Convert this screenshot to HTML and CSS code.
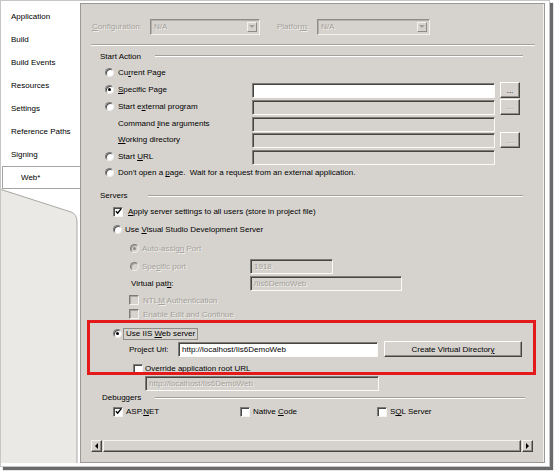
FILE: index.html
```html
<!DOCTYPE html>
<html>
<head>
<meta charset="utf-8">
<title>Web properties</title>
<link rel="stylesheet" href="styles.css">
</head>
<body>
<div class="frame">
  <nav class="sidebar">
    <ul class="tabs">
      <li class="tab">Application</li>
      <li class="tab">Build</li>
      <li class="tab">Build Events</li>
      <li class="tab">Resources</li>
      <li class="tab">Settings</li>
      <li class="tab">Reference Paths</li>
      <li class="tab">Signing</li>
      <li class="tab active">Web*</li>
    </ul>
    <svg class="tail" viewBox="0 0 79 274" preserveAspectRatio="xMinYMin slice">
      <path d="M0,0 L70,23 Q76,25 76,33 L76,274 L0,274 Z" fill="#ebe9e6"/>
      <path d="M0,0.5 L70,23 Q76,25 76,33 L76,274" fill="none" stroke="#aaa8a4" stroke-width="1"/>
    </svg>
  </nav>

  <main class="panel">
    <div class="config">
      <span class="cfg-label dis"><u>C</u>onfiguration:</span>
      <span class="combo cfg"><span class="dis">N/A</span><i class="drop"></i></span>
      <span class="plat-label dis">Platfor<u>m</u>:</span>
      <span class="combo plat"><span class="dis">N/A</span><i class="drop"></i></span>
    </div>
    <div class="etched"></div>

    <div class="group-head gh-start"><span class="gh-label w-start">Start Action</span><i class="rule"></i></div>
    <div class="start-rows">
      <div class="srow"><i class="radio c-radio"></i><span class="c-label">Cu<u>r</u>rent Page</span></div>
      <div class="srow"><i class="radio on c-radio"></i><span class="c-label"><u>S</u>pecific Page</span><span class="box white c-box"></span><span class="btn c-btn">...</span></div>
      <div class="srow"><i class="radio c-radio"></i><span class="c-label">Start e<u>x</u>ternal program</span><span class="box c-box"></span><span class="btn c-btn dis">...</span></div>
      <div class="srow"><span class="c-label">Command <u>l</u>ine arguments</span><span class="box c-box"></span></div>
      <div class="srow"><span class="c-label"><u>W</u>orking directory</span><span class="box c-box"></span><span class="btn c-btn dis">...</span></div>
      <div class="srow"><i class="radio c-radio"></i><span class="c-label">Start <u>U</u>RL</span><span class="box c-box"></span></div>
      <div class="srow"><i class="radio c-radio"></i><span class="c-wide">Don't open a <u>p</u>age.&nbsp; Wait for a request from an external application.</span></div>
    </div>

    <div class="group-head gh-servers"><span class="gh-label w-servers">Servers</span><i class="rule"></i></div>
    <div class="row r-apply"><i class="check on"><svg viewBox="0 0 8 8"><path d="M1,3.5 L3,6 L7,1" fill="none" stroke="#000" stroke-width="1.6"/></svg></i><span><u>A</u>pply server settings to all users (store in project file)</span></div>
    <div class="row r-usevs"><i class="radio"></i><span>Use <u>V</u>isual Studio Development Server</span></div>
    <div class="row r-auto"><i class="radio on off"></i><span class="dis">Auto-assig<u>n</u> Port</span></div>
    <div class="row r-spec"><i class="radio off"></i><span class="dis lbl-port">Spe<u>c</u>ific port</span><span class="box port"><span class="dis">1918</span></span></div>
    <div class="row r-vpath"><span class="lbl-vpath">Virtual pat<u>h</u>:</span><span class="box vpath"><span class="dis">/Iis6DemoWeb</span></span></div>
    <div class="row r-ntlm"><i class="check off"></i><span class="dis">NTL<u>M</u> Authentication</span></div>
    <div class="row r-edit"><i class="check off"></i><span class="dis">Enable Edit and Continue</span></div>
    <div class="row r-iis"><i class="radio on"></i><span class="focus">Use IIS <u>W</u>eb server</span></div>
    <div class="row r-url"><span class="lbl-url">Pro<u>j</u>ect Url:</span><span class="box white url">http://localhost/Iis6DemoWeb</span><span class="btn cvd">Create Virtual Director<u>y</u></span></div>
    <div class="row r-override"><i class="check"></i><span>Override application root <u>U</u>RL</span></div>
    <div class="row r-oburl"><span class="box oburl"><span class="dis">http://localhost/Iis6DemoWeb</span></span></div>

    <div class="group-head gh-debug"><span class="gh-label w-debug">Debuggers</span><i class="rule"></i></div>
    <div class="row r-debug">
      <span class="dbg w-asp"><i class="check on"><svg viewBox="0 0 8 8"><path d="M1,3.5 L3,6 L7,1" fill="none" stroke="#000" stroke-width="1.6"/></svg></i><span>ASP.<u>N</u>ET</span></span>
      <span class="dbg w-native"><i class="check"></i><span>Native <u>C</u>ode</span></span>
      <span class="dbg"><i class="check"></i><span>S<u>Q</u>L Server</span></span>
    </div>

    <div class="hscroll">
      <span class="sb-btn"><i class="arr-left"></i></span>
      <span class="sb-thumb"></span>
      <span class="sb-btn"><i class="arr-right"></i></span>
    </div>
  </main>

  <div class="callout"></div>
</div>
</body>
</html>
```

FILE: styles.css
```css
* { box-sizing: border-box; margin: 0; padding: 0; }
html, body { background: #fff; }
body {
  width: 554px;
  height: 471px;
  overflow: hidden;
  font-family: "Liberation Sans", Arial, sans-serif;
  font-size: 8px;
  color: #000;
}
u { text-decoration: underline; text-underline-offset: 1px; }
i { display: block; font-style: normal; }

.frame {
  position: relative;
  display: flex;
  width: 550px;
  height: 467px;
  border: 1px solid #c6c6c6;
  padding: 0 4px 3px 0;
  box-shadow: 3px 3px 1px #6a6a6a;
  background: #fff;
}

/* ---------- sidebar ---------- */
.sidebar {
  flex: none;
  width: 79px;
  display: flex;
  flex-direction: column;
  background: #fff;
}
.tabs { list-style: none; padding-top: 4px; }
.tab {
  height: 23px;
  line-height: 23px;
  padding-left: 10px;
  white-space: nowrap;
}
.tab.active {
  margin-left: 1px;
  border: 1px solid #a4a4a4;
  border-right: none;
  line-height: 21px;
  padding-left: 18px;
}
.tail { flex: 1; display: block; width: 79px; }

/* ---------- panel ---------- */
.panel {
  flex: 1;
  margin-top: 2px;
  border: 1px solid #9c9a95;
  background: #d6d3ce;
  box-shadow: inset -1px 0 0 #f2f1ef;
  display: flex;
  flex-direction: column;
  white-space: nowrap;
}

.dis { color: #a4a19a; text-shadow: 1px 1px 0 rgba(255,255,255,0.65); }

.config {
  display: flex;
  align-items: center;
  height: 17px;
  margin-top: 14px;
  padding-left: 11px;
}
.cfg-label { width: 58px; }
.plat-label { width: 40px; margin-left: 17px; }
.combo {
  display: flex;
  align-items: center;
  justify-content: space-between;
  height: 16px;
  padding: 0 2px 0 3px;
  border: 1px solid;
  border-color: #8e8c87 #f4f3f1 #f4f3f1 #8e8c87;
  box-shadow: inset 1px 1px 0 #b4b1ab;
}
.combo.cfg { width: 110px; }
.combo.plat { width: 113px; }
.drop {
  width: 10px;
  height: 10px;
  border: 1px solid;
  border-color: #f4f3f1 #8e8c87 #8e8c87 #f4f3f1;
  display: flex;
  align-items: center;
  justify-content: center;
}
.drop::after {
  content: "";
  border-top: 3px solid #a4a19a;
  border-left: 3px solid transparent;
  border-right: 3px solid transparent;
}

.etched {
  height: 2px;
  margin: 9px 9px 0 10px;
  border-top: 1px solid #a3a09a;
  border-bottom: 1px solid #fff;
}

.group-head {
  display: flex;
  align-items: center;
  height: 12px;
  padding: 0 21px 0 19px;
}
.gh-start { margin-top: 4px; }
.gh-servers { margin-top: 8.67px; }
.gh-debug { padding-left: 21px; padding-right: 19px; }
.w-start { width: 55px; }
.w-servers { width: 48px; }
.w-debug { width: 53px; }
.rule {
  flex: 1;
  height: 2px;
  border-top: 1px solid #a3a09a;
  border-bottom: 1px solid #fff;
}

/* ---------- controls ---------- */
.radio {
  flex: none;
  width: 9px;
  height: 9px;
  border-radius: 50%;
  background: #fff;
  border: 1px solid;
  border-color: #7e7c78 #eeede9 #eeede9 #7e7c78;
  box-shadow: inset 1px 1px 0 #505050;
  display: flex;
  align-items: center;
  justify-content: center;
}
.radio.on::after {
  content: "";
  width: 3px;
  height: 3px;
  border-radius: 50%;
  background: #000;
}
.radio.off { background: #d6d3ce; box-shadow: inset 1px 1px 0 #a09d97; }
.radio.off.on::after { background: #8c8a85; }

.check {
  flex: none;
  width: 10px;
  height: 10px;
  background: #fff;
  border: 1px solid;
  border-color: #7e7c78 #f4f3f1 #f4f3f1 #7e7c78;
  box-shadow: inset 1px 1px 0 #4a4a4a;
  display: flex;
  align-items: center;
  justify-content: center;
}
.check svg { width: 7px; height: 7px; display: block; }
.check.off { background: #d6d3ce; box-shadow: inset 1px 1px 0 #a9a6a0; }

.box {
  display: flex;
  align-items: center;
  height: 15px;
  padding-left: 3px;
  border: 1px solid;
  border-color: #7e7c78 #fbfaf9 #fbfaf9 #7e7c78;
  box-shadow: inset 1px 1px 0 #45443f;
  background: #d6d3ce;
}
.box.white { background: #fff; }

.btn {
  display: flex;
  align-items: center;
  justify-content: center;
  height: 16px;
  border: 1px solid;
  border-color: #fff #45443f #45443f #fff;
  box-shadow: inset -1px -1px 0 #8e8c87;
  background: #d6d3ce;
}

/* ---------- start action grid ---------- */
.start-rows { margin-top: 2.67px; }
.srow {
  display: grid;
  grid-template-columns: 24px 13px 134px 243px 5px 20px;
  height: 16.67px;
  align-items: center;
}
.c-radio { grid-column: 2; }
.c-label { grid-column: 3; }
.c-wide { grid-column: 3 / 7; }
.c-box { grid-column: 4; margin-top: 2px; }
.c-btn { grid-column: 6; margin-top: 1px; }

/* ---------- servers rows ---------- */
.row { display: flex; align-items: center; }
.r-apply { height: 18px; margin-top: 1px; padding-left: 32px; }
.r-apply .check { margin-right: 5px; }
.r-usevs { height: 18px; padding-left: 32px; }
.r-usevs .radio { margin-right: 3px; }
.r-auto { height: 19px; padding-left: 49px; }
.r-spec { height: 17px; padding-left: 49px; }
.r-auto .radio, .r-spec .radio { margin-right: 3px; }
.lbl-port { width: 108px; }
.box.port { width: 83px; }
.r-vpath { height: 18px; padding-left: 50px; }
.lbl-vpath { width: 119px; }
.box.vpath { width: 152px; }
.r-ntlm { height: 15px; padding-left: 48px; }
.r-edit { height: 13px; padding-left: 48px; }
.r-ntlm .check, .r-edit .check { margin-right: 4px; }
.r-iis { height: 16px; margin-top: 5px; padding-left: 32px; }
.r-iis .radio { margin-right: 1px; }
.focus {
  height: 12px;
  line-height: 10px;
  padding: 0 2px;
  border: 1px solid #8f8d88;
}
.r-url { height: 15px; padding-left: 48px; }
.lbl-url { width: 49px; }
.box.url { width: 200px; }
.btn.cvd { width: 138px; margin-left: 6px; }
.r-override { height: 14px; margin-top: 5px; padding-left: 52px; }
.r-override .check { margin-right: 2px; }
.r-oburl { height: 16px; padding-left: 64px; }
.box.oburl { width: 234px; }

.r-debug { height: 16px; padding-left: 32px; }
.dbg { display: flex; align-items: center; }
.dbg .check { margin-right: 3px; }
.w-asp { width: 127px; }
.w-native { width: 137px; }

/* ---------- scrollbar ---------- */
.hscroll {
  display: flex;
  height: 12px;
  margin: 20px 11px 0 10px;
}
.sb-btn, .sb-thumb {
  display: flex;
  align-items: center;
  justify-content: center;
  border: 1px solid;
  border-color: #f4f3f1 #45443f #45443f #f4f3f1;
  box-shadow: inset -1px -1px 0 #8e8c87;
  background: #d6d3ce;
}
.sb-btn { width: 11px; }
.sb-thumb { flex: 1; margin: 0 1px; }
.arr-left {
  border-right: 3px solid #000;
  border-top: 3px solid transparent;
  border-bottom: 3px solid transparent;
}
.arr-right {
  border-left: 3px solid #000;
  border-top: 3px solid transparent;
  border-bottom: 3px solid transparent;
}

/* ---------- annotation overlay ---------- */
.callout {
  position: absolute;
  left: 86px;
  top: 319px;
  width: 449px;
  height: 55px;
  border: 3px solid #e3191c;
}
```
